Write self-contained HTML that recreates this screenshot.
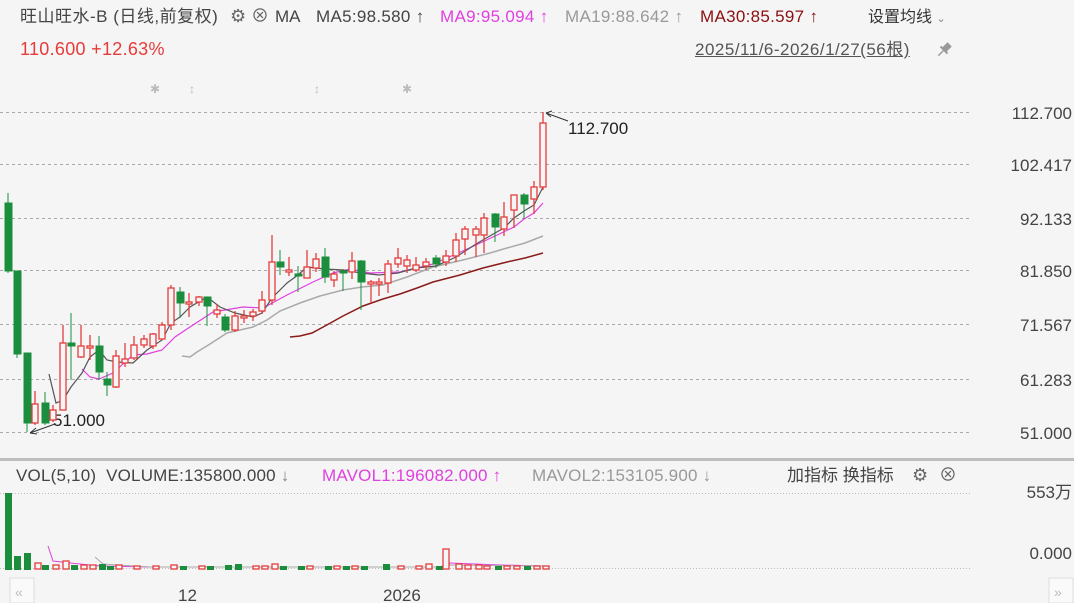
<!DOCTYPE html>
<html><head><meta charset="utf-8"><style>
body{margin:0;width:1074px;height:603px;background:#f5f5f5;font-family:"Liberation Sans","Noto Sans CJK SC",sans-serif;overflow:hidden;position:relative}
.t{position:absolute;white-space:nowrap;font-size:17px;line-height:20px}
</style></head><body>
<div class="t" style="left:20px;top:7px;color:#444;letter-spacing:0.5px">旺山旺水-B (日线,前复权)</div>
<div class="t" style="left:230px;top:6px;color:#666;font-size:18px">⚙</div>
<div class="t" style="left:251px;top:6px;color:#666;font-size:18px">⊗</div>
<div class="t" style="left:275px;top:7px;color:#444">MA</div>
<div class="t" style="left:316px;top:7px;color:#444;letter-spacing:0.3px">MA5:98.580 ↑</div>
<div class="t" style="left:440px;top:7px;color:#e040e0;letter-spacing:0.3px">MA9:95.094 ↑</div>
<div class="t" style="left:565px;top:7px;color:#999;letter-spacing:0.3px">MA19:88.642 ↑</div>
<div class="t" style="left:700px;top:7px;color:#8b1010;letter-spacing:0.3px">MA30:85.597 ↑</div>
<div class="t" style="left:868px;top:8px;color:#333;font-size:16px">设置均线 <span style="color:#888;font-size:11px">⌄</span></div>
<div class="t" style="left:20px;top:39px;color:#e83a3a;font-size:18px;letter-spacing:0.3px">110.600 +12.63%</div>
<div class="t" style="left:695px;top:40px;color:#555;font-size:17px;text-decoration:underline;letter-spacing:0.5px">2025/11/6-2026/1/27(56根)</div>
<svg width="1074" height="603" style="position:absolute;left:0;top:0">
<g transform="translate(944,50) rotate(45)" fill="#999"><rect x="-3" y="-8" width="6" height="8"/><rect x="-5" y="-1" width="10" height="2"/><rect x="-0.7" y="1" width="1.4" height="7"/></g>
<g fill="#bbb" font-size="12"><text x="150" y="93">✱</text><text x="189" y="93">↕</text><text x="314" y="93">↕</text><text x="402" y="93">✱</text></g>
<g stroke="#aaa" stroke-dasharray="3,3" stroke-width="1">
<line x1="0" x2="972" y1="112.5" y2="112.5"/><line x1="0" x2="972" y1="164.5" y2="164.5"/><line x1="0" x2="972" y1="218.5" y2="218.5"/><line x1="0" x2="972" y1="270.5" y2="270.5"/><line x1="0" x2="972" y1="324.5" y2="324.5"/><line x1="0" x2="972" y1="379.5" y2="379.5"/><line x1="0" x2="972" y1="432.5" y2="432.5"/>
</g>
<g stroke="#bbb" stroke-dasharray="1,2"><line x1="0" x2="970" y1="493.5" y2="493.5"/><line x1="0" x2="970" y1="568.5" y2="568.5"/></g>
<g font-size="17" fill="#444" text-anchor="end"><text x="1072" y="119">112.700</text><text x="1072" y="171">102.417</text><text x="1072" y="225">92.133</text><text x="1072" y="277">81.850</text><text x="1072" y="331">71.567</text><text x="1072" y="386">61.283</text><text x="1072" y="439">51.000</text><text x="1072" y="498">553万</text><text x="1072" y="559">0.000</text></g>
<rect x="0" y="458" width="1074" height="3" fill="#bdbdbd"/>
<g stroke-width="1.2" fill="none">
<polyline stroke="#8b1a1a" stroke-width="1.5" points="290,337 300,336 312,333 325,326 343,316 363,306 383,299 400,294 417,288 433,282 460,275 483,268 507,262 525,258 543,253"/>
<polyline stroke="#aaa" stroke-width="1.5" points="182,356 190,357 197,352 210,344 227,333 253,327 267,320 280,311 300,303 320,296 343,290 362,287 383,285 407,277 433,267 467,259 490,253 507,248 525,243 543,236"/>
<polyline stroke="#e040e0" points="82,369 90,377 99,379 113,373 133,355 147,354 162,350 175,337 190,327 213,312 243,307 263,308 287,295 313,282 333,273 350,269 370,273 400,272 417,268 433,264 456,254 476,245 495,236 514,227 524,219 534,213 543,203"/>
<polyline stroke="#555" points="49,374 56,403 63,400 71,387 82,373 90,357 99,350 107,360 117,362 133,363 147,350 162,340 171,323 180,317 190,307 207,297 220,307 235,313 253,317 262,313 272,298 287,283 298,275 307,267 325,269 343,270 361,273 379,275 398,273 416,268 436,266 456,257 476,244 495,233 504,228 514,218 524,211 534,205 543,187"/>
</g>
<g stroke="#333" fill="none"><path d="M546,113 L568,121 M546,113 L552,111 M546,113 L551,117"/><path d="M30,433 L55,424 M30,433 L36,428 M30,433 L37,434"/></g>
<text x="568" y="134" font-size="17" fill="#222">112.700</text>
<text x="53" y="426" font-size="17" fill="#222">51.000</text>
<polyline fill="none" stroke="#e040e0" points="48,546 53,561 70,563 100,566 150,567 300,567 440,567 450,563 500,565 545,566"/>
<polyline fill="none" stroke="#aaa" points="95,557 103,564 150,567 300,567 440,567 450,565 545,566"/>
<g font-size="17" fill="#444"><text x="178" y="601">12</text><text x="383" y="601">2026</text></g>
<rect x="10" y="578" width="24" height="25" fill="#fafafa" stroke="#ddd"/><text x="15" y="597" fill="#bbb" font-size="14">«</text>
<rect x="1049" y="578" width="24" height="25" fill="#fafafa" stroke="#ddd"/><text x="1054" y="597" fill="#bbb" font-size="14">»</text>
</svg>
<div class="t" style="left:16px;top:466px;color:#444;letter-spacing:0.2px">VOL(5,10)&nbsp; VOLUME:135800.000 <span style="color:#888">↓</span></div>
<div class="t" style="left:322px;top:466px;color:#e040e0;letter-spacing:0.2px">MAVOL1:196082.000 ↑</div>
<div class="t" style="left:532px;top:466px;color:#999;letter-spacing:0.2px">MAVOL2:153105.900 ↓</div>
<div class="t" style="left:787px;top:466px;color:#444">加指标 换指标</div>
<div class="t" style="left:912px;top:465px;color:#666;font-size:18px">⚙</div>
<div class="t" style="left:939px;top:465px;color:#666;font-size:18px">⊗</div>
<svg width="1074" height="603" style="position:absolute;left:0;top:0">
<g stroke-width="1">
<g fill="#1b8e3e" stroke="#1b8e3e">
<line x1="8" x2="8" y1="193" y2="273"/><rect x="5" y="203" width="7" height="68"/>
<line x1="17" x2="17" y1="271" y2="358"/><rect x="14" y="271" width="7" height="83"/>
<line x1="27" x2="27" y1="353" y2="432"/><rect x="24" y="353" width="7" height="70"/>
<line x1="45" x2="45" y1="392" y2="425"/><rect x="42" y="403" width="7" height="20"/>
<line x1="71" x2="71" y1="313" y2="380"/><rect x="68" y="343" width="7" height="3"/>
<line x1="99" x2="99" y1="336" y2="380"/><rect x="96" y="346" width="7" height="26"/>
<line x1="107" x2="107" y1="372" y2="396"/><rect x="104" y="379" width="7" height="6"/>
<line x1="180" x2="180" y1="287" y2="318"/><rect x="177" y="292" width="7" height="11"/>
<line x1="207" x2="207" y1="297" y2="326"/><rect x="204" y="297" width="7" height="9"/>
<line x1="225" x2="225" y1="314" y2="332"/><rect x="222" y="317" width="7" height="13"/>
<line x1="280" x2="280" y1="250" y2="275"/><rect x="277" y="262" width="7" height="5"/>
<line x1="298" x2="298" y1="266" y2="292"/><rect x="295" y="274" width="7" height="2"/>
<line x1="325" x2="325" y1="248" y2="283"/><rect x="322" y="257" width="7" height="20"/>
<line x1="343" x2="343" y1="269" y2="291"/><rect x="340" y="271" width="7" height="2"/>
<line x1="361" x2="361" y1="260" y2="310"/><rect x="358" y="261" width="7" height="21"/>
<line x1="436" x2="436" y1="255" y2="268"/><rect x="433" y="258" width="7" height="6"/>
<line x1="495" x2="495" y1="213" y2="242"/><rect x="492" y="214" width="7" height="13"/>
<line x1="524" x2="524" y1="193" y2="219"/><rect x="521" y="195" width="7" height="9"/>
</g>
<g fill="#f5f5f5" stroke="#e43c3c" stroke-width="1.3">
<line x1="35" x2="35" y1="391" y2="425"/><rect x="32" y="404" width="6" height="19"/>
<line x1="53" x2="53" y1="405" y2="422"/><rect x="50" y="410" width="6" height="10"/>
<line x1="63" x2="63" y1="325" y2="410"/><rect x="60" y="343" width="6" height="67"/>
<line x1="81" x2="81" y1="325" y2="358"/><rect x="78" y="346" width="6" height="11"/>
<line x1="90" x2="90" y1="335" y2="360"/><rect x="87" y="346" width="6" height="2"/>
<line x1="116" x2="116" y1="350" y2="388"/><rect x="113" y="356" width="6" height="31"/>
<line x1="125" x2="125" y1="343" y2="367"/><rect x="122" y="359" width="6" height="4"/>
<line x1="134" x2="134" y1="336" y2="360"/><rect x="131" y="345" width="6" height="13"/>
<line x1="144" x2="144" y1="335" y2="348"/><rect x="141" y="339" width="6" height="6"/>
<line x1="153" x2="153" y1="333" y2="349"/><rect x="150" y="334" width="6" height="12"/>
<line x1="162" x2="162" y1="322" y2="340"/><rect x="159" y="325" width="6" height="14"/>
<line x1="171" x2="171" y1="285" y2="330"/><rect x="168" y="288" width="6" height="37"/>
<line x1="189" x2="189" y1="293" y2="317"/><rect x="186" y="302" width="6" height="2"/>
<line x1="199" x2="199" y1="296" y2="306"/><rect x="196" y="297" width="6" height="5"/>
<line x1="217" x2="217" y1="304" y2="318"/><rect x="214" y="310" width="6" height="4"/>
<line x1="235" x2="235" y1="311" y2="332"/><rect x="232" y="316" width="6" height="14"/>
<line x1="244" x2="244" y1="310" y2="323"/><rect x="241" y="316" width="6" height="2"/>
<line x1="253" x2="253" y1="309" y2="321"/><rect x="250" y="312" width="6" height="4"/>
<line x1="262" x2="262" y1="291" y2="314"/><rect x="259" y="300" width="6" height="11"/>
<line x1="272" x2="272" y1="235" y2="305"/><rect x="269" y="262" width="6" height="38"/>
<line x1="289" x2="289" y1="257" y2="276"/><rect x="286" y="270" width="6" height="2"/>
<line x1="307" x2="307" y1="250" y2="278"/><rect x="304" y="267" width="6" height="11"/>
<line x1="316" x2="316" y1="253" y2="272"/><rect x="313" y="259" width="6" height="9"/>
<line x1="334" x2="334" y1="271" y2="287"/><rect x="331" y="274" width="6" height="6"/>
<line x1="352" x2="352" y1="252" y2="279"/><rect x="349" y="261" width="6" height="11"/>
<line x1="371" x2="371" y1="280" y2="303"/><rect x="368" y="282" width="6" height="2"/>
<line x1="379" x2="379" y1="278" y2="296"/><rect x="376" y="282" width="6" height="2"/>
<line x1="388" x2="388" y1="260" y2="293"/><rect x="385" y="264" width="6" height="19"/>
<line x1="398" x2="398" y1="248" y2="268"/><rect x="395" y="258" width="6" height="6"/>
<line x1="407" x2="407" y1="255" y2="273"/><rect x="404" y="260" width="6" height="6"/>
<line x1="416" x2="416" y1="257" y2="272"/><rect x="413" y="265" width="6" height="5"/>
<line x1="426" x2="426" y1="258" y2="270"/><rect x="423" y="262" width="6" height="4"/>
<line x1="446" x2="446" y1="250" y2="266"/><rect x="443" y="256" width="6" height="6"/>
<line x1="456" x2="456" y1="233" y2="262"/><rect x="453" y="240" width="6" height="16"/>
<line x1="465" x2="465" y1="226" y2="255"/><rect x="462" y="229" width="6" height="10"/>
<line x1="476" x2="476" y1="226" y2="257"/><rect x="473" y="229" width="6" height="6"/>
<line x1="484" x2="484" y1="213" y2="253"/><rect x="481" y="218" width="6" height="17"/>
<line x1="504" x2="504" y1="202" y2="236"/><rect x="501" y="217" width="6" height="12"/>
<line x1="514" x2="514" y1="195" y2="228"/><rect x="511" y="195" width="6" height="15"/>
<line x1="534" x2="534" y1="181" y2="214"/><rect x="531" y="187" width="6" height="12"/>
<line x1="543" x2="543" y1="112" y2="190"/><rect x="540" y="123" width="6" height="64"/>
</g>
<g fill="#1b8e3e">
<rect x="5" y="493" width="7" height="77"/><rect x="14" y="556" width="7" height="14"/><rect x="24" y="553" width="7" height="17"/><rect x="42" y="565" width="7" height="5"/><rect x="71" y="565" width="7" height="5"/><rect x="99" y="564" width="7" height="6"/><rect x="107" y="566" width="7" height="4"/><rect x="180" y="566" width="7" height="4"/><rect x="207" y="566" width="7" height="4"/><rect x="225" y="565" width="7" height="5"/><rect x="235" y="564" width="7" height="6"/><rect x="280" y="566" width="7" height="4"/><rect x="298" y="566" width="7" height="4"/><rect x="325" y="566" width="7" height="4"/><rect x="343" y="566" width="7" height="4"/><rect x="361" y="566" width="7" height="4"/><rect x="383" y="564" width="7" height="6"/><rect x="436" y="566" width="7" height="4"/><rect x="495" y="566" width="7" height="4"/><rect x="524" y="566" width="7" height="4"/>
</g>
<g fill="#f5f5f5" stroke="#e43c3c" stroke-width="1.3">
<rect x="35" y="563" width="6" height="6"/><rect x="53" y="565" width="6" height="4"/><rect x="63" y="561" width="6" height="8"/><rect x="81" y="565" width="6" height="4"/><rect x="90" y="565" width="6" height="4"/><rect x="116" y="565" width="6" height="4"/><rect x="134" y="566" width="6" height="3"/><rect x="153" y="566" width="6" height="3"/><rect x="171" y="565" width="6" height="4"/><rect x="199" y="566" width="6" height="3"/><rect x="253" y="566" width="6" height="3"/><rect x="262" y="566" width="6" height="3"/><rect x="272" y="564" width="6" height="5"/><rect x="307" y="566" width="6" height="3"/><rect x="334" y="566" width="6" height="3"/><rect x="352" y="566" width="6" height="3"/><rect x="398" y="566" width="6" height="3"/><rect x="416" y="566" width="6" height="3"/><rect x="426" y="564" width="6" height="5"/><rect x="443" y="549" width="6" height="20"/><rect x="456" y="564" width="6" height="5"/><rect x="465" y="565" width="6" height="4"/><rect x="476" y="565" width="6" height="4"/><rect x="484" y="566" width="6" height="3"/><rect x="504" y="566" width="6" height="3"/><rect x="514" y="566" width="6" height="3"/><rect x="534" y="566" width="6" height="3"/><rect x="543" y="566" width="6" height="3"/>
</g>
</g>
</svg>
</body></html>
